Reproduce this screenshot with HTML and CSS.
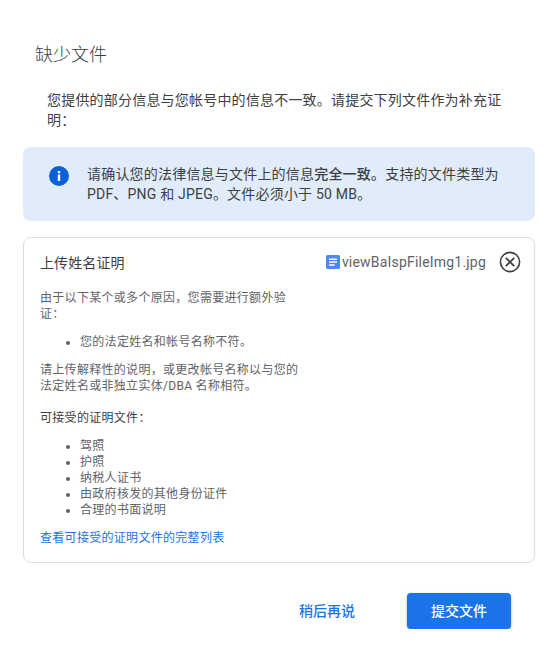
FILE: index.html
```html
<!DOCTYPE html>
<html lang="zh-CN">
<head>
  <meta charset="UTF-8" />
  <meta name="viewport" content="width=device-width, initial-scale=1.0" />
  <title>缺少文件</title>
  <link rel="stylesheet" href="styles.css">
</head>
<body>
  <div class="dialog">
    <h1 class="dialog-title">缺少文件</h1>
    <p class="intro">您提供的部分信息与您帐号中的信息不一致。请提交下列文件作为补充证明：</p>

    <div class="notice">
      <svg class="notice-icon" viewBox="0 0 24 24" width="24" height="24">
        <path fill="#0b5fd8" d="M12 2a10 10 0 1 0 0 20 10 10 0 0 0 0-20z"/>
        <path fill="#fff" d="M10.8 10.6h2.4V17h-2.4zM10.8 7h2.4v2.3h-2.4z"/>
      </svg>
      <p class="notice-text">请确认您的法律信息与文件上的信息<b>完全一致。</b>支持的文件类型为 PDF、PNG 和 JPEG。文件必须小于 50 MB。</p>
    </div>

    <div class="upload-card">
      <div class="upload-info">
        <h2 class="upload-title">上传姓名证明</h2>
        <p class="reason">由于以下某个或多个原因，您需要进行额外验证：</p>
        <ul class="doc-list">
          <li>您的法定姓名和帐号名称不符。</li>
        </ul>
        <p class="reason">请上传解释性的说明，或更改帐号名称以与您的法定姓名或非独立实体/DBA 名称相符。</p>
        <p class="accept-label">可接受的证明文件：</p>
        <ul class="doc-list">
          <li>驾照</li>
          <li>护照</li>
          <li>纳税人证书</li>
          <li>由政府核发的其他身份证件</li>
          <li>合理的书面说明</li>
        </ul>
        <a class="full-list" href="#">查看可接受的证明文件的完整列表</a>
      </div>
      <div class="file-row">
        <svg class="file-icon" viewBox="0 0 14 14" width="14" height="14">
          <rect width="14" height="14" rx="1.5" fill="#4a8af0"/>
          <path fill="#fff" d="M3 3.4h8v1.5H3zM3 6.3h8v1.5H3zM3 9.2h5.5v1.5H3z"/>
        </svg>
        <span class="file-name">viewBaIspFileImg1.jpg</span>
        <svg class="file-remove" viewBox="0 0 22 22" width="22" height="22">
          <circle cx="11" cy="11" r="9.6" fill="none" stroke="#3c4043" stroke-width="1.6"/>
          <path fill="none" stroke="#3c4043" stroke-width="1.8" d="M6.8 6.8l8.4 8.4M15.2 6.8l-8.4 8.4"/>
        </svg>
      </div>
    </div>

    <div class="actions">
      <button class="btn-later">稍后再说</button>
      <button class="btn-submit">提交文件</button>
    </div>
  </div>
</body>
</html>
```

FILE: styles.css
```css
body {
  margin: 0;
  background-color: #fff;
  font-family: Roboto, "Noto Sans CJK SC", sans-serif;
  color: #3c4043;
}
p {
  margin: 0;
}
.dialog {
  padding: 43px 22px 0 23px;
}
.dialog-title {
  margin: 0 0 0 12px;
  font-size: 18px;
  line-height: 24px;
  font-weight: 300;
  color: #3c4043;
}
.intro {
  margin: 23px 24px 0 24px;
  font-size: 14px;
  line-height: 20px;
  letter-spacing: 0.2px;
}
.notice {
  display: flex;
  gap: 16px;
  margin-top: 17px;
  padding: 17px 24px;
  height: 40px;
  background-color: #e1ecfa;
  border-radius: 8px;
}
.notice-icon {
  flex: none;
}
.notice-text {
  font-size: 14px;
  line-height: 20px;
  letter-spacing: 0.2px;
}
.notice-text b {
  font-weight: 500;
}
.upload-card {
  display: flex;
  justify-content: space-between;
  margin-top: 16px;
  height: 324px;
  padding: 0 13px 0 16px;
  border: 1px solid #dadce0;
  border-radius: 8px;
}
.upload-info {
  width: 260px;
  font-size: 12px;
  line-height: 16px;
  letter-spacing: 0.3px;
  color: #5f6368;
}
.upload-title {
  margin: 15px 0 17px;
  font-size: 14px;
  line-height: 20px;
  letter-spacing: 0.1px;
  font-weight: 400;
  color: #3c4043;
}
.doc-list {
  margin: 12px 0;
  padding-left: 40px;
}
.accept-label {
  margin-top: 16px;
  color: #3c4043;
}
.full-list {
  color: #1a73e8;
  text-decoration: none;
}
.file-row {
  display: flex;
  align-items: center;
  height: 20px;
  margin-top: 14px;
  font-size: 14px;
  letter-spacing: 0.2px;
}
.file-icon {
  margin-right: 2px;
}
.file-name {
  color: #5f6368;
}
.file-remove {
  margin-left: 13px;
}
.actions {
  display: flex;
  justify-content: flex-end;
  align-items: center;
  gap: 28px;
  margin-top: 30px;
  padding-right: 24px;
}
.actions button {
  font-family: inherit;
  font-size: 14px;
  font-weight: 500;
  border: none;
  border-radius: 4px;
  padding-bottom: 3px;
  cursor: pointer;
}
.btn-later {
  padding-left: 24px;
  padding-right: 24px;
  height: 36px;
  background: none;
  color: #1a73e8;
}
.btn-submit {
  width: 104px;
  height: 36px;
  background-color: #1a73e8;
  color: #fff;
  box-shadow: 0 1px 3px rgba(60, 64, 67, 0.4);
}
```
